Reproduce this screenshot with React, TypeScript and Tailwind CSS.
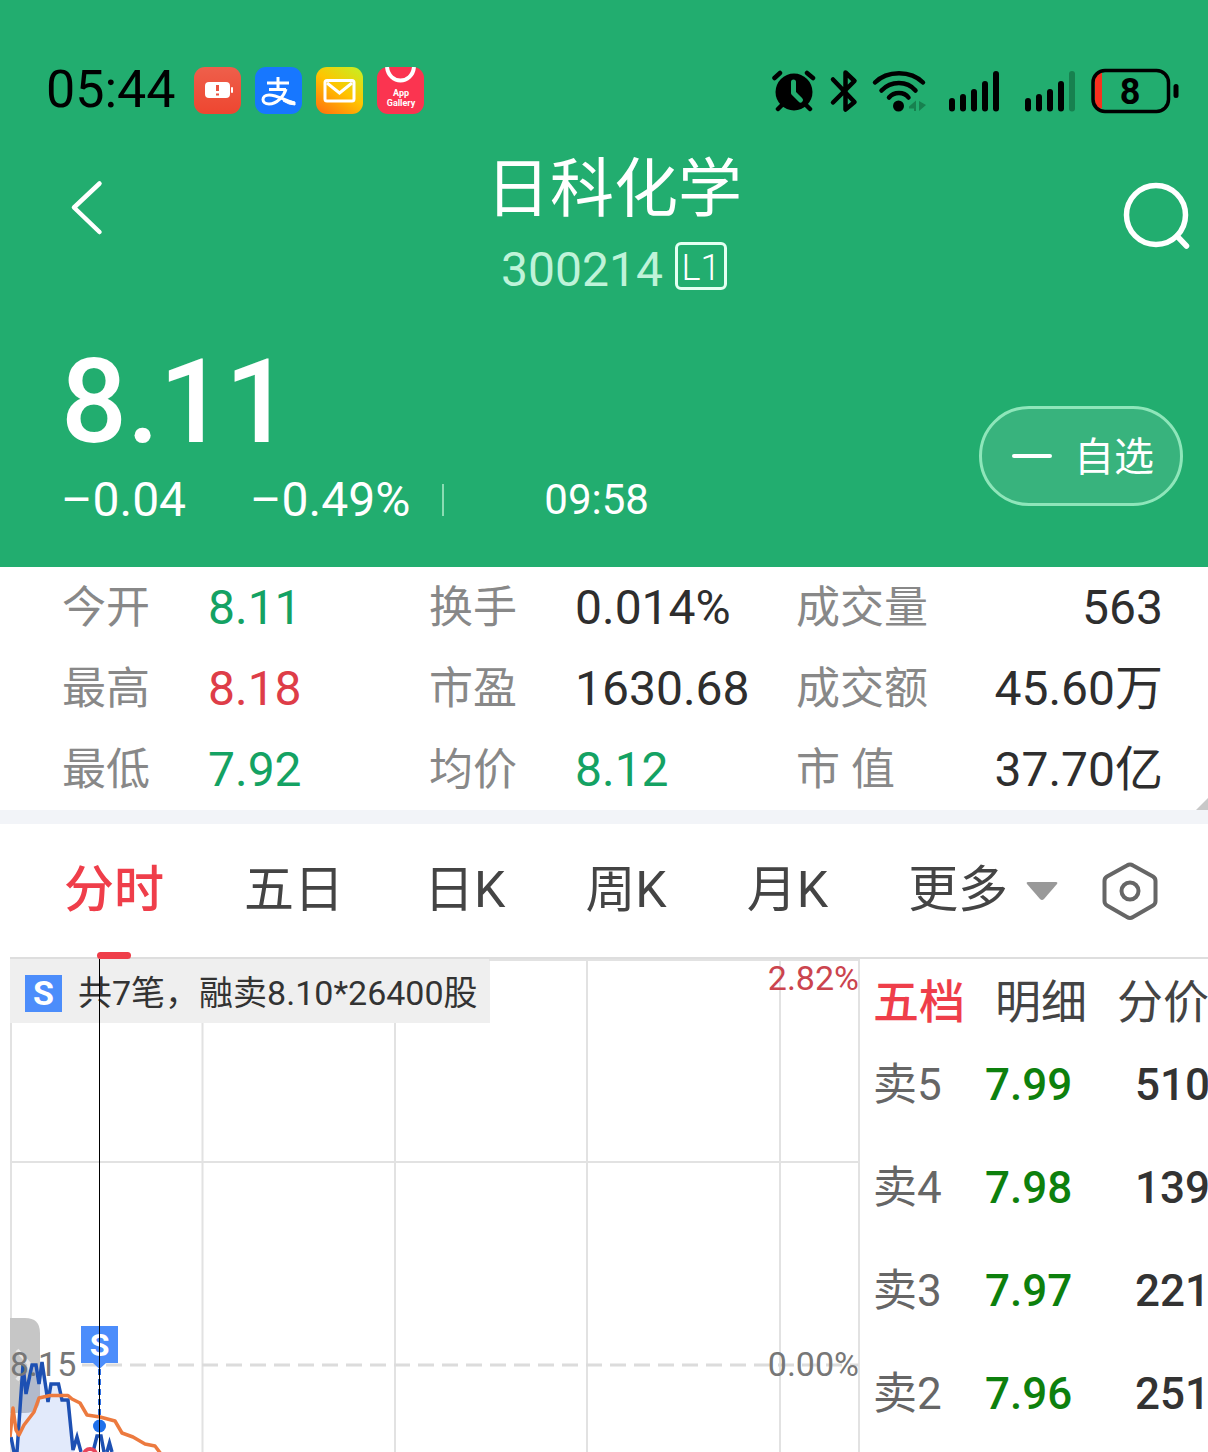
import React from 'react';

const stats = [
  { label: '今开', value: '8.11', color: 'text-[#14a263]' },
  { label: '换手', value: '0.014%', color: 'text-[#2e2e2e]' },
  { label: '成交量', value: '563', color: 'text-[#2e2e2e]' },
  { label: '最高', value: '8.18', color: 'text-[#de3d48]' },
  { label: '市盈', value: '1630.68', color: 'text-[#2e2e2e]' },
  { label: '成交额', value: '45.60万', color: 'text-[#2e2e2e]' },
  { label: '最低', value: '7.92', color: 'text-[#14a263]' },
  { label: '均价', value: '8.12', color: 'text-[#14a263]' },
  { label: '市 值', value: '37.70亿', color: 'text-[#2e2e2e]' },
];

const periods = ['分时', '五日', '日K', '周K', '月K'];

const asks = [
  { level: '卖5', price: '7.99', volume: '510' },
  { level: '卖4', price: '7.98', volume: '139' },
  { level: '卖3', price: '7.97', volume: '221' },
  { level: '卖2', price: '7.96', volume: '251' },
];

function AppIcons() {
  return (
    <div className="flex gap-[14px]">
      <svg className="size-[47px]" viewBox="0 0 47 47">
        <defs>
          <linearGradient id="low" x1="0" y1="0" x2="0" y2="1">
            <stop offset="0" stopColor="#ee5f4b" />
            <stop offset="1" stopColor="#ee4630" />
          </linearGradient>
        </defs>
        <rect width="47" height="47" rx="11" fill="url(#low)" />
        <rect x="11" y="15" width="25" height="16" rx="4" fill="#fff" />
        <rect x="37" y="20" width="2" height="6" rx="1" fill="#fff" />
        <path d="M23.500 18v6M23.500 26.500v2" stroke="#ea5240" strokeWidth="3" />
      </svg>
      <svg className="size-[47px]" viewBox="0 0 47 47" fill="none" stroke="#fff">
        <rect width="47" height="47" rx="11" fill="#1777ff" stroke="none" />
        <path d="M12 16h22M23 10v12M14 22.500h17" strokeWidth="3" />
        <path d="M31 22C29 29 22 37 14 37C6 37 6 28 14 28C22 28 29 33 39 36" strokeWidth="3" />
        <path d="M29 32.500L40 35V38Q34 38 28 34Z" fill="#fff" strokeWidth="1" />
      </svg>
      <svg className="size-[47px]" viewBox="0 0 47 47">
        <defs>
          <linearGradient id="mail" x1="0.200" y1="1" x2="0.900" y2="0">
            <stop offset="0" stopColor="#ff7a0c" />
            <stop offset="0.500" stopColor="#ffc400" />
            <stop offset="1" stopColor="#c8ee22" />
          </linearGradient>
        </defs>
        <rect width="47" height="47" rx="11" fill="url(#mail)" />
        <rect x="9" y="13.500" width="29" height="20.500" rx="2" fill="none" stroke="#fff" strokeWidth="3" />
        <path d="M11 16L23.500 26L36 16" fill="none" stroke="#fff" strokeWidth="3" />
      </svg>
      <svg className="size-[47px]" viewBox="0 0 47 47">
        <rect width="47" height="47" rx="11" fill="#fb3450" />
        <path d="M10 0C12 18 35 18 37 0" fill="none" stroke="#fff" strokeWidth="4" />
        <text x="24" y="29" textAnchor="middle" fontSize="9" fontWeight="700" fill="#fff">App</text>
        <text x="24" y="39" textAnchor="middle" fontSize="9" fontWeight="700" fill="#fff">Gallery</text>
      </svg>
    </div>
  );
}

function SystemIcons() {
  return (
    <svg className="w-[408px] h-12" viewBox="772 66 408 48" fill="none" stroke="#000" strokeLinecap="round" strokeLinejoin="round">
      {/* alarm */}
      <circle cx="794" cy="92" r="18.500" fill="#000" stroke="none" />
      <path d="M774.500 78L780 73M813 78L807 73M783 104l-5 5M805 104l5 5" strokeWidth="4.500" />
      <path d="M793.500 82v11l7 7" stroke="#22ad6f" strokeWidth="5" />
      {/* bluetooth */}
      <path d="M833 79.500L854.500 102L845.500 109.500V72.500L854.500 81L833 102.500" strokeWidth="4.500" />
      {/* wifi */}
      <path d="M875 82.500C887 70 911 70 923 82.500M881.500 90.500C891 80.500 907 80.500 915.500 90.500M889 97.500C894 91.500 904 91.500 908.500 97.500" strokeWidth="4.500" />
      <circle cx="898.500" cy="106" r="5.500" fill="#000" stroke="none" />
      <path d="M909 106.500L916 100.500V111H914V108.500H909ZM919 101V111L926 105Z" fill="#17814f" stroke="none" />
      {/* signal */}
      <path d="M952 101v7.500M963 97v11.500M974 92v16.500M985 84v24.500M996 74v34.500" strokeWidth="6" />
      <path d="M1028 101v7.500M1039 97v11.500M1050 92v16.500M1061 84v24.500" strokeWidth="6" />
      <path d="M1072 74v34.500" stroke="#17814f" strokeWidth="6" />
      {/* battery */}
      <path d="M1102 72.500V108.500C1097 108 1095 105 1095 100V81C1095 76 1097 73 1102 72.500Z" fill="#f8301f" stroke="none" />
      <rect x="1093" y="70.500" width="75.500" height="41" rx="12" strokeWidth="3.500" />
      <path d="M1176 86.500v9" strokeWidth="5" />
      <text x="1130" y="104" textAnchor="middle" fontSize="36" fontWeight="700" fill="#000" stroke="none">8</text>
    </svg>
  );
}

function Header() {
  return (
    <header className="bg-[#22ad6f] pt-[66px] text-white">
      <div className="flex items-center justify-between pl-[46px] pr-7">
        <div className="flex items-center gap-[18px]">
          <span className="text-[52px] leading-[48px] text-black">05:44</span>
          <AppIcons />
        </div>
        <SystemIcons />
      </div>

      <div className="flex items-center justify-between pl-[66px] pr-4 pt-8">
        <button aria-label="返回">
          <svg className="h-20 w-[42px]" viewBox="0 0 42 80" fill="none" stroke="#fff" strokeWidth="4.500" strokeLinecap="round" strokeLinejoin="round">
            <path d="M33.500 5.500L8 29.500L33.500 54" />
          </svg>
        </button>
        <div className="flex flex-col items-center">
          <h1 className="text-[64px] leading-[88px]">日科化学</h1>
          <div className="mt-2 flex h-12 items-center gap-3">
            <span className="pt-2 text-5xl text-[#bff3d9]">300214</span>
            <span className="flex h-12 w-[52px] items-center justify-center rounded-md border-3 border-[#e4fff2] pt-1 text-4xl font-light">L1</span>
          </div>
        </div>
        <button aria-label="搜索">
          <svg className="size-[72px]" viewBox="0 0 72 72" fill="none" stroke="#fff" strokeWidth="5.500" strokeLinecap="round">
            <circle cx="36" cy="33" r="29.500" />
            <path d="M57 54L66.500 64" />
          </svg>
        </button>
      </div>

      <div className="flex items-end justify-between pl-[61px] pr-[25px] pt-[52px] pb-[43px]">
        <div>
          <div className="text-[116px] leading-[120px] font-medium">8.11</div>
          <div className="mt-[14px] flex items-center leading-[48px]">
            <span className="text-5xl">–0.04</span>
            <span className="ml-16 text-5xl">–0.49%</span>
            <span className="ml-8 h-8 w-[2px] bg-[#8bdcb3]" />
            <span className="ml-[100px] text-[42px]">09:58</span>
          </div>
        </div>
        <button className="mb-[18px] flex h-[100px] items-center gap-[22px] rounded-full border-3 border-[#8ee6ba] bg-[#38b37d] pl-[30px] pr-[26px] text-[40px]">
          <span className="h-1 w-10 rounded-full bg-white" />
          <span className="pt-1">自选</span>
        </button>
      </div>
    </header>
  );
}

function Stats() {
  return (
    <div className="relative">
      <dl className="grid grid-cols-3 pl-[62px] pr-[45px]">
        {stats.map(({ label, value, color }, i) => (
          <div key={label} className={`flex h-[81px] items-center ${i % 3 === 2 ? 'justify-between' : ''}`}>
            <dt className="min-w-[146px] text-[44px] text-[#888]">{label}</dt>
            <dd className={`whitespace-nowrap text-5xl ${color}`}>{value}</dd>
          </div>
        ))}
      </dl>
      <svg className="absolute right-0 bottom-0 size-3" viewBox="0 0 12 12">
        <path d="M12 0V12H0Z" fill="#c8c8c8" />
      </svg>
    </div>
  );
}

function PeriodTabs() {
  return (
    <nav className="ml-[10px] flex h-[135px] items-center border-b-2 border-[#dedede] pl-[54px] text-[50px] text-[#444]">
      <div className="flex gap-20">
        {periods.map((name, i) => (
          <button
            key={name}
            className={`relative whitespace-nowrap leading-[133px] ${i === 0 ? 'font-medium text-[#ef3e4a]' : ''}`}
          >
            {name}
            {i === 0 && <span className="absolute -bottom-[2px] left-1/2 h-[7px] w-[34px] -translate-x-1/2 rounded-sm bg-[#ef3e4a]" />}
          </button>
        ))}
        <button className="flex items-center gap-[18px] whitespace-nowrap">
          <span>更多</span>
          <svg className="h-5 w-8" viewBox="0 0 32 20">
            <path d="M2 1H30Q32 1 31 3L18 18Q16 20 14 18L1 3Q0 1 2 1Z" fill="#999" />
          </svg>
        </button>
      </div>
      <button aria-label="设置" className="ml-11">
        <svg className="h-[60px] w-14" viewBox="0 0 56 60" fill="none" stroke="#666" strokeWidth="4" strokeLinejoin="round">
          <path d="M25 4.500Q28 2.500 31 4.500L51 15.500Q53.500 17 53.500 20V40Q53.500 43 51 44.500L31 56Q28 58 25 56L5 44.500Q2.500 43 2.500 40V20Q2.500 17 5 15.500Z" />
          <circle cx="28" cy="30" r="8.500" />
        </svg>
      </button>
    </nav>
  );
}

function Chart() {
  return (
    <section className="relative ml-[10px] min-w-0 flex-1">
      <div className="flex h-16 w-fit items-center gap-4 bg-[#efefef] pl-[15px] pr-3 pt-1">
        <span className="flex size-[37px] items-center justify-center bg-[#4c8dfb] text-[34px] font-bold text-white">S</span>
        <span className="whitespace-nowrap text-[34px] text-[#333]">共7笔，融卖8.10*26400股</span>
      </div>
      <svg className="absolute inset-x-0 top-0 w-full" viewBox="0 2 850 493" fill="none">
        <g stroke="#e2e2e2" strokeWidth="2">
          <path d="M1 66V495M192.500 66V495M385 66V495M577 2V495M770 2V495M849 2V495" />
          <path d="M0 205H849" />
          <path d="M479 3H849" />
        </g>
        <path d="M72 408H849" stroke="#dcdcdc" strokeWidth="3" strokeDasharray="16 8" />

        {/* side handle */}
        <path d="M0 361H15Q30 361 30 376V441Q30 456 15 456H0Z" fill="#c6c6c6" />
        <path d="M7 393L20 408L7 423" stroke="#e6e6e6" strokeWidth="4" />

        {/* price and average lines */}
        <path
          d="M7 495L13 408L16 435L22 408H26L29 427L32 407L38 443L41 427H48L52 443H58L64 495Z"
          fill="#4c7de8"
          fillOpacity="0.160"
        />
        <path
          d="M1 480L4 495H7L13 408L16 437L22 408H26L29 427L32 405L38 445L41 427H48.500L52 443H58L63 493L67 480L71 495M83 495L87 479H91L94 495M97 495L99.500 486L102 495"
          stroke="#1d50b3"
          strokeWidth="3.500"
        />
        <path
          d="M0 480L3 451L6 473L9 478L14 468L24 455L29 441L40 438.500H58L62 442L70 446L77 458L90 460L105 464L112 476L123 480L135 487L145 489L151 497"
          stroke="#ec7a3f"
          strokeWidth="3.500"
          strokeLinejoin="round"
        />
        <circle cx="80" cy="498" r="6" fill="#fff" stroke="#e8445a" strokeWidth="4" />
        <path d="M89.500 412V462" stroke="#2f6fe0" strokeWidth="3" strokeDasharray="6 4" />
        <circle cx="89.500" cy="469" r="6.500" fill="#1f70ea" />

        <g fontSize="34" fill="#777">
          <text x="0" y="419">8.15</text>
          <text x="849" y="419" textAnchor="end">0.00%</text>
          <text x="849" y="33" textAnchor="end" fill="#cb444e">2.82%</text>
        </g>

        {/* sell marker */}
        <path d="M71 369H108V406H96L89.500 412L83 406H71Z" fill="#4c8dfb" />
        <text x="89.500" y="399" textAnchor="middle" fontSize="32" fontWeight="700" fill="#fff">S</text>
        <path d="M89.500 2V495" stroke="#000" />
      </svg>
    </section>
  );
}

function OrderBook() {
  return (
    <aside className="w-[348px] shrink-0 overflow-hidden pl-[13px]">
      <div className="flex h-[74px] items-center gap-[30px] pt-3 text-[46px] whitespace-nowrap text-[#444]">
        <button className="font-medium text-[#ef3e4a]">五档</button>
        <button>明细</button>
        <button>分价</button>
      </div>
      <table className="text-left text-[44px] whitespace-nowrap">
        <tbody>
          {asks.map((row) => (
            <tr key={row.level} className="h-[103px]">
              <th className="w-[112px] min-w-[112px] font-normal text-[#666]">{row.level}</th>
              <td className="w-[150px] min-w-[150px] font-medium text-[#0d800d]">{row.price}</td>
              <td className="font-medium text-[#333]">{row.volume}</td>
            </tr>
          ))}
        </tbody>
      </table>
    </aside>
  );
}

export default function App() {
  return (
    <div className="h-screen overflow-hidden bg-white font-[Roboto,'Noto_Sans_CJK_SC',sans-serif]">
      <Header />
      <Stats />
      <div className="h-[14px] bg-[#f2f4f8]" />
      <PeriodTabs />
      <main className="flex">
        <Chart />
        <OrderBook />
      </main>
    </div>
  );
}
